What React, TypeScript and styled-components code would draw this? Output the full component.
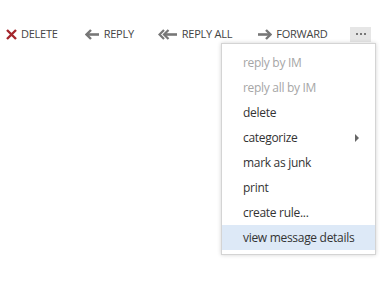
import React from 'react';
import styled, { createGlobalStyle } from 'styled-components';

const GlobalStyle = createGlobalStyle`
  html, body {
    margin: 0;
    padding: 0;
    background: #ffffff;
  }
  body {
    font-family: 'Open Sans', 'Noto Sans', sans-serif;
    width: 390px;
    height: 284px;
    overflow: hidden;
  }
`;

const Page = styled.div`
  padding: 26px 0 0 6px;
`;

const Toolbar = styled.div`
  display: flex;
  align-items: center;
  height: 16px;
`;

const ToolButton = styled.button<{ $gap: number }>`
  display: flex;
  align-items: center;
  gap: 4px;
  margin-right: ${(p) => p.$gap}px;
  padding: 0;
  border: none;
  background: transparent;
  font-family: inherit;
  font-size: 11px;
  letter-spacing: -0.25px;
  color: #444444;
  text-transform: uppercase;
  cursor: pointer;
  line-height: 16px;
`;

const MoreButton = styled.button`
  width: 21px;
  height: 15px;
  padding: 0;
  border: none;
  background: #e6e6e6;
  display: flex;
  align-items: center;
  justify-content: center;
  gap: 2px;
`;

const Dot = styled.span`
  width: 2px;
  height: 2px;
  background: #777777;
`;

const MenuWrap = styled.div`
  display: flex;
  justify-content: flex-end;
  padding: 1px 14px 0 0;
`;

const Menu = styled.ul`
  list-style: none;
  margin: 0;
  padding: 6px 0 4px;
  width: 153px;
  border: 1px solid #d4d4d4;
  background: #ffffff;
  box-shadow: 0 0 4px rgba(0, 0, 0, 0.18);
`;

const Item = styled.li<{ $disabled?: boolean; $active?: boolean }>`
  position: relative;
  height: 25px;
  line-height: 25px;
  padding-left: 21px;
  font-size: 12px;
  letter-spacing: -0.3px;
  color: ${(p) => (p.$disabled ? '#a6a6a6' : '#333333')};
  background: ${(p) => (p.$active ? '#dde9f7' : 'transparent')};
`;

const SubArrow = styled.span`
  position: absolute;
  right: 16px;
  top: 9px;
  width: 0;
  height: 0;
  border-top: 4px solid transparent;
  border-bottom: 4px solid transparent;
  border-left: 4px solid #666666;
`;

const DeleteIcon = () => (
  <svg width="11" height="11" viewBox="0 0 11 11">
    <path d="M1 1 L10 10 M10 1 L1 10" stroke="#a4262c" strokeWidth="2.4" />
  </svg>
);

const ReplyIcon = () => (
  <svg width="15" height="11" viewBox="0 0 15 11">
    <path d="M6 1 L1.5 5.5 L6 10" stroke="#777" strokeWidth="2.4" fill="none" />
    <path d="M2 5.5 H14" stroke="#777" strokeWidth="2.6" />
  </svg>
);

const ReplyAllIcon = () => (
  <svg width="20" height="11" viewBox="0 0 20 11">
    <path d="M6 1 L1.5 5.5 L6 10" stroke="#777" strokeWidth="2.2" fill="none" />
    <path d="M10.5 1 L6 5.5 L10.5 10" stroke="#777" strokeWidth="2.2" fill="none" />
    <path d="M7 5.5 H19" stroke="#777" strokeWidth="2.6" />
  </svg>
);

const ForwardIcon = () => (
  <svg width="15" height="11" viewBox="0 0 15 11">
    <path d="M9 1 L13.5 5.5 L9 10" stroke="#777" strokeWidth="2.4" fill="none" />
    <path d="M1 5.5 H13" stroke="#777" strokeWidth="2.6" />
  </svg>
);

const items = [
  { label: 'reply by IM', disabled: true },
  { label: 'reply all by IM', disabled: true },
  { label: 'delete' },
  { label: 'categorize', sub: true },
  { label: 'mark as junk' },
  { label: 'print' },
  { label: 'create rule...' },
  { label: 'view message details', active: true },
];

const App = () => {
  return (
    <Page>
      <GlobalStyle />
      <Toolbar>
        <ToolButton $gap={27}>
          <DeleteIcon />
          Delete
        </ToolButton>
        <ToolButton $gap={24}>
          <ReplyIcon />
          Reply
        </ToolButton>
        <ToolButton $gap={25}>
          <ReplyAllIcon />
          Reply all
        </ToolButton>
        <ToolButton $gap={23}>
          <ForwardIcon />
          Forward
        </ToolButton>
        <MoreButton>
          <Dot />
          <Dot />
          <Dot />
        </MoreButton>
      </Toolbar>
      <MenuWrap>
        <Menu>
          {items.map((it) => (
            <Item key={it.label} $disabled={it.disabled} $active={it.active}>
              {it.label}
              {it.sub && <SubArrow />}
            </Item>
          ))}
        </Menu>
      </MenuWrap>
    </Page>
  );
};

export default App;
